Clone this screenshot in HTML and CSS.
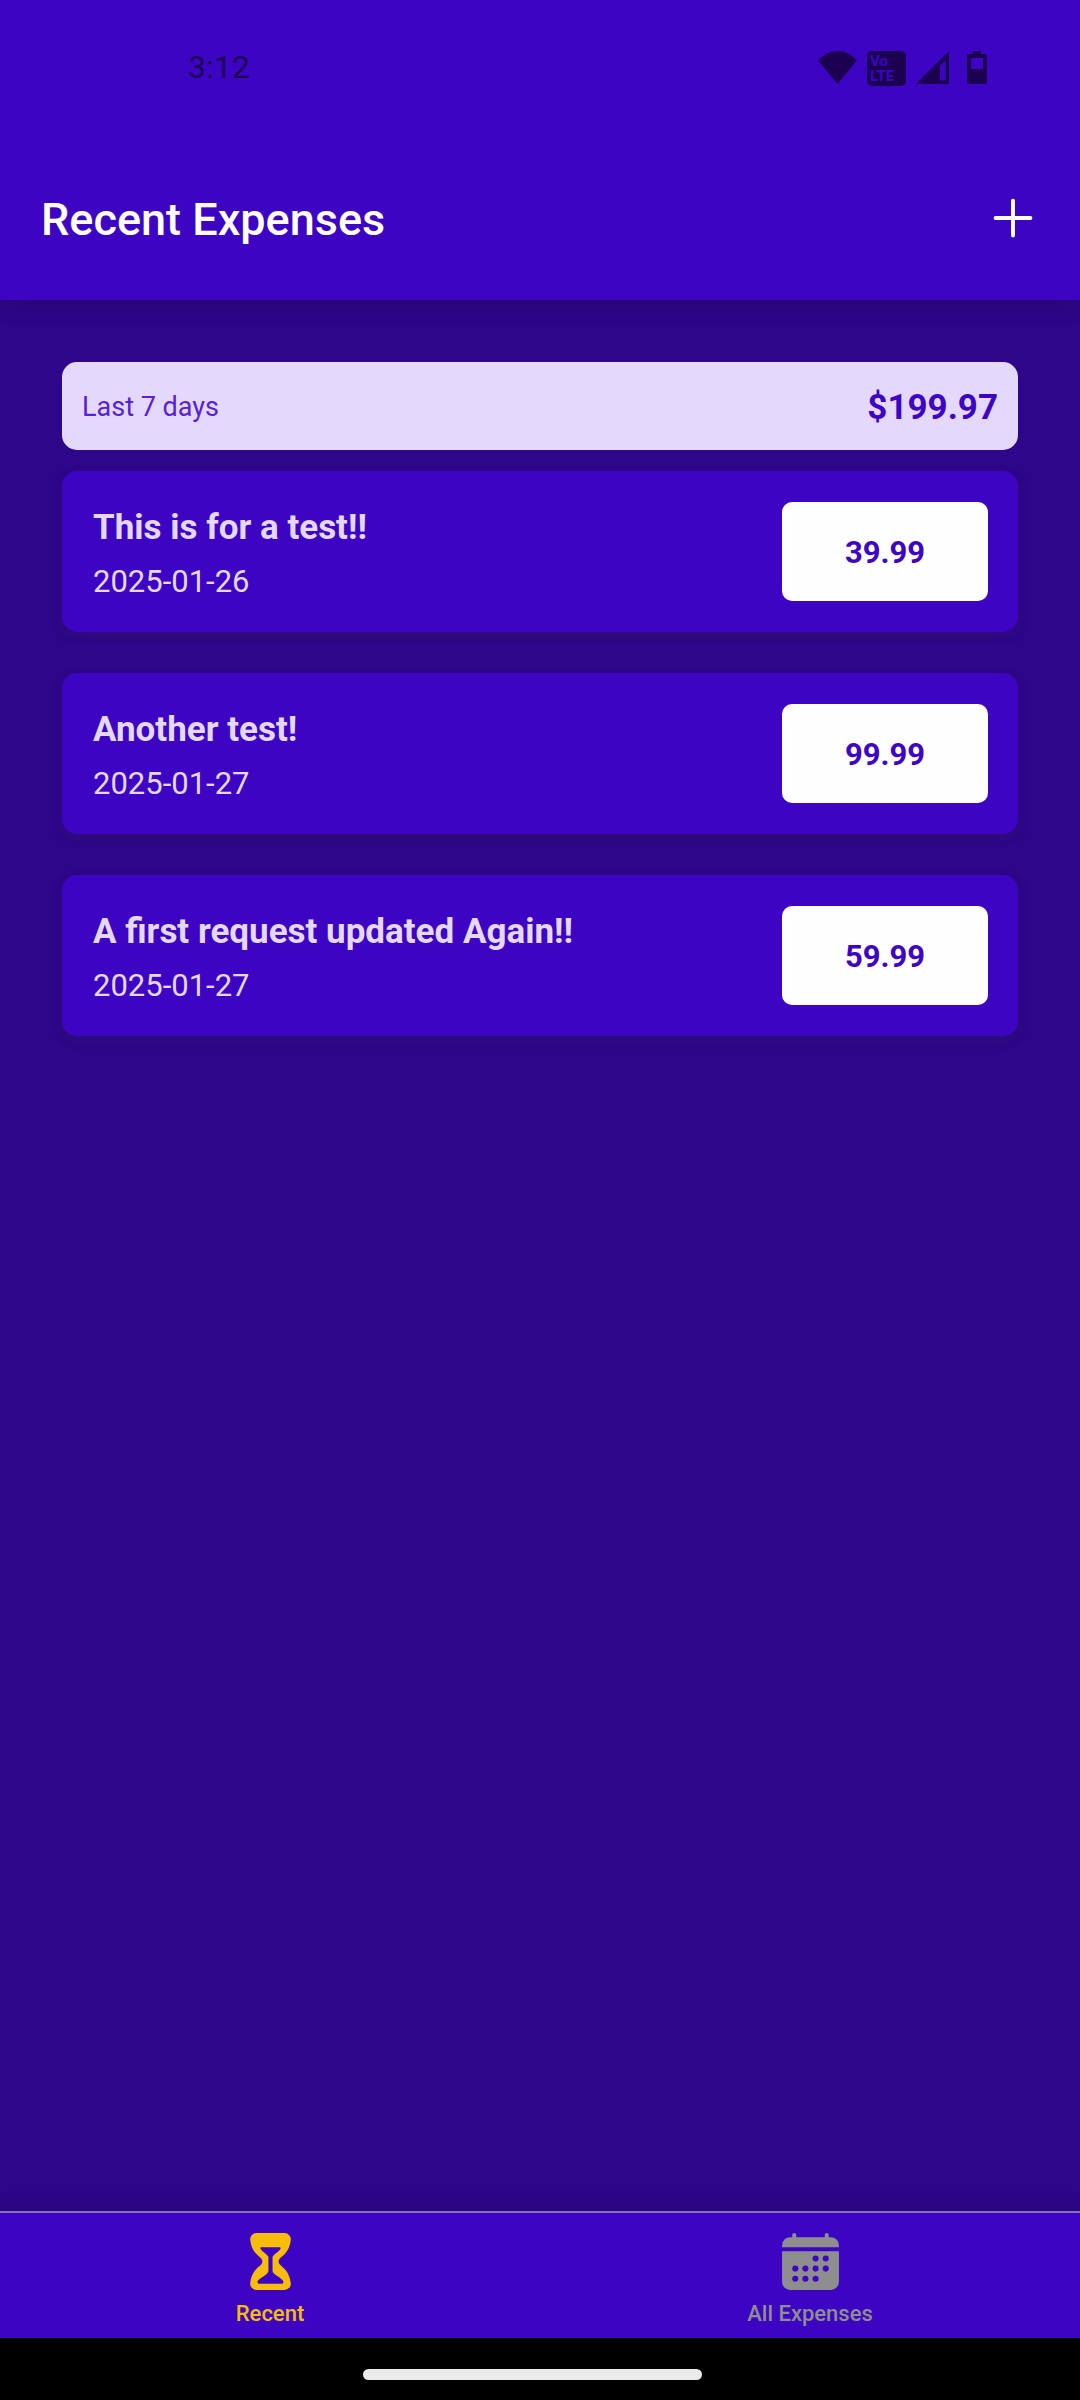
FILE: index.html
```html
<!DOCTYPE html>
<html lang="en">
<head>
  <meta charset="utf-8">
  <meta name="viewport" content="width=device-width, initial-scale=1">
  <title>Recent Expenses</title>
  <link rel="stylesheet" href="styles.css">
</head>
<body>
  <div class="app">
    <div class="top">
      <div class="status-bar">
        <span class="clock">3:12</span>
        <div class="status-icons">
          <svg width="39" height="35" viewBox="0 0 39 35" aria-hidden="true">
            <path d="M0 9.500Q8 0 19.500 0T39 9.500L19.500 33Z"/>
          </svg>
          <svg width="39" height="35" viewBox="0 0 39 35" aria-hidden="true">
            <rect width="39" height="35" rx="5"/>
            <text class="volte" x="3" y="15">Vo</text>
            <text class="volte" x="3" y="30">LTE</text>
          </svg>
          <svg width="33" height="35" viewBox="0 0 33 35" aria-hidden="true">
            <path fill-rule="evenodd" d="M33 0V33H0ZM29.500 9L24 14.500V29.500H29.500Z"/>
          </svg>
          <svg class="battery" width="20" height="35" viewBox="0 0 20 35" aria-hidden="true">
            <path fill-rule="evenodd" d="M6 0H14V3H18Q20 3 20 5V31Q20 33 18 33H2Q0 33 0 31V5Q0 3 2 3H6ZM4 7V18H16V7Z"/>
          </svg>
        </div>
      </div>
      <header class="header">
        <h1 class="header-title">Recent Expenses</h1>
        <button class="add-button" type="button" aria-label="Add expense">
          <svg width="62" height="62" viewBox="0 0 512 512" aria-hidden="true">
            <path d="M256 112v288M400 256H112"/>
          </svg>
        </button>
      </header>
    </div>

    <main class="content">
      <section class="summary">
        <span class="period">Last 7 days</span>
        <span class="sum">$199.97</span>
      </section>
      <ul class="expenses">
        <li class="expense">
          <div class="details">
            <h2 class="description">This is for a test!!</h2>
            <time class="date" datetime="2025-01-26">2025-01-26</time>
          </div>
          <span class="amount">39.99</span>
        </li>
        <li class="expense">
          <div class="details">
            <h2 class="description">Another test!</h2>
            <time class="date" datetime="2025-01-27">2025-01-27</time>
          </div>
          <span class="amount">99.99</span>
        </li>
        <li class="expense">
          <div class="details">
            <h2 class="description">A first request updated Again!!</h2>
            <time class="date" datetime="2025-01-27">2025-01-27</time>
          </div>
          <span class="amount">59.99</span>
        </li>
      </ul>
    </main>

    <nav class="tabs">
      <a class="tab tab-active" href="#recent" aria-current="page">
        <svg width="65" height="65" viewBox="0 0 512 512" aria-hidden="true">
          <path d="M415.700 427.130c-8.740-76.890-43.830-108.760-69.460-132C328.520 279 320 270.610 320 256c0-14.410 8.490-22.640 26.160-38.440 25.930-23.170 61.440-54.910 69.560-132.840a47 47 0 00-12-36.260A50.300 50.300 0 00366.390 32H145.610a50.340 50.340 0 00-37.390 16.460A47.050 47.050 0 0096.280 84.720c8.090 77.680 43.470 109.190 69.300 132.190C183.420 232.800 192 241.090 192 256c0 15.100-8.600 23.560-26.500 39.750C140 318.850 105 350.480 96.300 427.130A46.590 46.590 0 00108 463.330 50.440 50.440 0 00145.610 480h220.780A50.440 50.440 0 00404 463.330a46.590 46.590 0 0011.700-36.200zm-72.410 4.870H169c-15.600 0-20-18-9.060-29.160C186.550 376 240 356.780 240 326V224c0-19.850-38-35-61.510-67.200-3.880-5.310-3.490-12.800 6.370-12.800h142.730c8.410 0 10.220 7.430 6.400 12.750C310.820 189 272 204.050 272 224v102c0 30.530 55.710 47 80.400 76.870 9.950 12.040 6.470 29.130-9.110 29.130z"/>
        </svg>
        <span>Recent</span>
      </a>
      <a class="tab" href="#all">
        <svg width="65" height="65" viewBox="0 0 512 512" aria-hidden="true">
          <path d="M480 128a64 64 0 00-64-64h-16V48a16 16 0 00-32 0v16H144V48a16 16 0 00-32 0v16H96a64 64 0 00-64 64v12a4 4 0 004 4h440a4 4 0 004-4zM32 416a64 64 0 0064 64h320a64 64 0 0064-64V179a3 3 0 00-3-3H35a3 3 0 00-3 3z"/>
          <g class="days">
            <circle cx="296" cy="232" r="24"/><circle cx="376" cy="232" r="24"/>
            <circle cx="136" cy="312" r="24"/><circle cx="216" cy="312" r="24"/><circle cx="296" cy="312" r="24"/><circle cx="376" cy="312" r="24"/>
            <circle cx="136" cy="392" r="24"/><circle cx="216" cy="392" r="24"/><circle cx="296" cy="392" r="24"/>
          </g>
        </svg>
        <span>All Expenses</span>
      </a>
    </nav>
    <div class="system-nav"><span class="handle"></span></div>
  </div>
</body>
</html>
```
FILE: styles.css
```css
:root {
  --primary-50: #e4d9fd;
  --primary-400: #5721d4;
  --primary-500: #3e04c3;
  --primary-700: #2d0689;
  --accent: #f7bc0c;
  --status: #1b0052;
}

* {
  box-sizing: border-box;
}

body {
  margin: 0;
  font-family: Roboto, "Liberation Sans", sans-serif;
  background: var(--primary-700);
}

.app {
  display: flex;
  flex-direction: column;
  min-height: 100vh;
}

.top {
  background: var(--primary-500);
  box-shadow: 0 4px 20px rgba(30, 10, 60, 0.3);
}

.status-bar {
  display: flex;
  justify-content: space-between;
  align-items: flex-start;
  height: 136px;
  padding: 51px 93px 0 188px;
  color: var(--status);
}

.clock {
  font-size: 32px;
  line-height: 33px;
}

.status-icons {
  display: flex;
  gap: 10px;
  fill: var(--status);
}

.battery {
  margin-left: 8px;
}

.volte {
  fill: var(--primary-500);
  font-size: 15px;
  font-weight: 700;
}

.header {
  display: flex;
  justify-content: space-between;
  align-items: center;
  height: 164px;
  padding: 0 36px 0 41px;
}

.header-title {
  margin: 0;
  padding-top: 4px;
  color: #fff;
  font-size: 45px;
  font-weight: 500;
  line-height: 54px;
}

.add-button {
  display: flex;
  padding: 0;
  border: 0;
  background: none;
  cursor: pointer;
}

.add-button path {
  fill: none;
  stroke: #fff;
  stroke-width: 32;
  stroke-linecap: round;
}

.content {
  flex: 1;
  padding: 62px 62px 0;
}

.summary {
  display: flex;
  justify-content: space-between;
  align-items: center;
  height: 88px;
  padding: 2px 20px 0;
  border-radius: 15px;
  background: var(--primary-50);
}

.period {
  color: var(--primary-400);
  font-size: 27px;
}

.sum {
  color: var(--primary-500);
  font-size: 35px;
  font-weight: 700;
}

.expenses {
  display: flex;
  flex-direction: column;
  gap: 41px;
  margin: 21px 0 0;
  padding: 0;
  list-style: none;
}

.expense {
  display: flex;
  justify-content: space-between;
  align-items: center;
  padding: 31px 30px 31px 31px;
  border-radius: 15px;
  background: var(--primary-500);
  box-shadow: 0 4px 10px rgba(48, 24, 90, 0.4);
}

.details {
  display: flex;
  flex-direction: column;
  gap: 8px;
  color: var(--primary-50);
}

.description {
  margin: 0;
  font-size: 35px;
  font-weight: 700;
  line-height: 52px;
}

.date {
  font-size: 31px;
  line-height: 39px;
}

.amount {
  display: flex;
  justify-content: center;
  align-items: center;
  width: 206px;
  height: 99px;
  padding-top: 2px;
  border-radius: 10px;
  background: #fefefe;
  color: var(--primary-500);
  font-size: 31px;
  font-weight: 700;
}

.tabs {
  display: flex;
  border-top: 2px solid #8a6ac4;
  background: var(--primary-500);
  box-shadow: 0 -2px 16px rgba(30, 10, 60, 0.3);
}

.tab {
  display: flex;
  flex: 1;
  flex-direction: column;
  align-items: center;
  height: 125px;
  padding-top: 16px;
  color: #8e8e8f;
  font-size: 22px;
  font-weight: 500;
  line-height: 40px;
  text-decoration: none;
}

.tab svg {
  fill: currentColor;
}

.tab .days {
  fill: var(--primary-500);
}

.tab-active {
  color: var(--accent);
}

.system-nav {
  display: flex;
  justify-content: center;
  height: 62px;
  padding: 31px 15px 0 0;
  background: #000;
}

.handle {
  width: 339px;
  height: 11px;
  border-radius: 6px;
  background: #ebebeb;
}
```
